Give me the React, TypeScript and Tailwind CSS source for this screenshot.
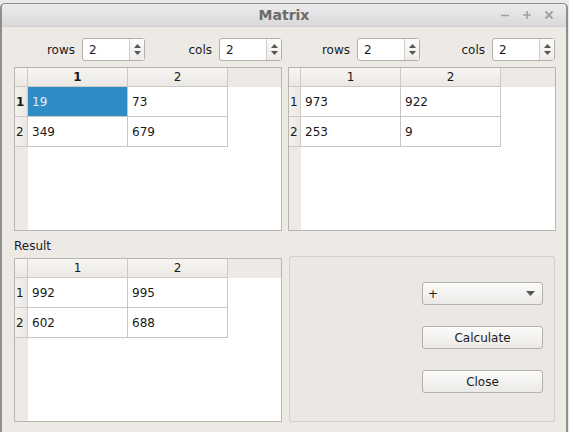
import React from "react";

const FONT = { fontFamily: '"DejaVu Sans", "Liberation Sans", sans-serif' };

function SpinBox({ value }: { value: string }) {
  return (
    <div className="flex h-[23px] w-[63px] items-stretch rounded-[3px] border border-[#b3afa9] bg-white">
      <div className="flex flex-1 items-center pl-[6px] text-[12px] text-[#1a1a1a]">{value}</div>
      <div className="flex w-[15px] flex-col items-center justify-center gap-[3px] border-l border-[#cfcbc5] bg-gradient-to-b from-[#fbfbfa] to-[#eeece9]">
        <svg width="7" height="4" viewBox="0 0 7 4">
          <path d="M0 4 L3.5 0 L7 4 Z" fill="#555" />
        </svg>
        <svg width="7" height="4" viewBox="0 0 7 4">
          <path d="M0 0 L7 0 L3.5 4 Z" fill="#555" />
        </svg>
      </div>
    </div>
  );
}

function SpinGroup({ label }: { label: string }) {
  return (
    <div className="flex items-center justify-end gap-[7px]">
      <span className="text-[12px] text-[#1a1a1a]">{label}</span>
      <SpinBox value="2" />
    </div>
  );
}

type TableProps = {
  data: string[][];
  rowHeaderW: number;
  boldFirst?: boolean;
  selected?: boolean;
};

function Table({ data, rowHeaderW, boldFirst, selected }: TableProps) {
  const rhClass = rowHeaderW === 13 ? "w-[13px]" : "w-[12px]";
  return (
    <div className="flex h-[164px] w-[268px] flex-col overflow-hidden border border-[#b8b4ae] bg-white">
      <div className="flex h-[19px] shrink-0 bg-[#edeae6]">
        <div className={`${rhClass} shrink-0 border-r border-b border-[#cdc9c3] bg-gradient-to-b from-[#f7f6f4] to-[#ebe8e4]`} />
        {["1", "2"].map((h, i) => (
          <div
            key={h}
            className={`flex w-[100px] shrink-0 items-center justify-center border-r border-b border-[#cdc9c3] bg-gradient-to-b from-[#f7f6f4] to-[#ebe8e4] text-[12px] text-[#1a1a1a] ${boldFirst && i === 0 ? "font-bold" : ""}`}
          >
            {h}
          </div>
        ))}
        <div className="flex-1" />
      </div>
      <div className="flex flex-1">
        <div className={`${rhClass} flex shrink-0 flex-col bg-[#edeae6]`}>
          {data.map((_, r) => (
            <div
              key={r}
              className={`flex h-[30px] items-center border-r border-b border-[#cdc9c3] bg-gradient-to-r from-[#f3f1ee] to-[#ebe8e4] pl-[1px] text-[12px] text-[#1a1a1a] ${boldFirst && r === 0 ? "font-bold" : ""}`}
            >
              {r + 1}
            </div>
          ))}
        </div>
        <div className="flex flex-col">
          {data.map((row, r) => (
            <div key={r} className="flex h-[30px]">
              {row.map((c, ci) => {
                const sel = selected && r === 0 && ci === 0;
                return (
                  <div
                    key={ci}
                    className={`flex w-[100px] items-center border-r border-b border-[#c9c6c2] pl-[4px] text-[12px] ${sel ? "bg-[#308cc6] text-[#e3eef8]" : "text-[#1a1a1a]"}`}
                  >
                    {c}
                  </div>
                );
              })}
            </div>
          ))}
        </div>
      </div>
    </div>
  );
}

function PushButton({ children }: { children: React.ReactNode }) {
  return (
    <div className="flex h-[23px] w-[121px] items-center justify-center rounded-[3px] border border-[#b3afa9] bg-gradient-to-b from-[#fbfbfa] to-[#eceae7] text-[12px] text-[#1a1a1a]">
      {children}
    </div>
  );
}

export default function App() {
  return (
    <div className="h-[432px] w-[569px] overflow-hidden bg-[#e9e9e9] pt-[3px] pr-[1px]" style={FONT}>
      <div className="flex h-[429px] flex-col overflow-hidden rounded-t-[5px] border-x-2 border-t border-[#8e8e8e] bg-[#edeae6]">
        <div className="relative flex h-[23px] shrink-0 items-center justify-center border-b border-[#cfcfcf] bg-gradient-to-b from-[#ececec] to-[#d9d9d9]">
          <span className="text-[14px] font-bold text-[#6b6b6b]">Matrix</span>
          <div className="absolute right-[12px] top-0 flex h-full items-center gap-[12px]">
            <svg width="10" height="10" viewBox="0 0 10 10">
              <path d="M1 5.5 H9" stroke="#a0a0a0" strokeWidth="1.6" />
            </svg>
            <svg width="10" height="10" viewBox="0 0 10 10">
              <path d="M1 5 H9 M5 1 V9" stroke="#a0a0a0" strokeWidth="1.6" />
            </svg>
            <svg width="10" height="10" viewBox="0 0 10 10">
              <path d="M1.5 1.5 L8.5 8.5 M8.5 1.5 L1.5 8.5" stroke="#a0a0a0" strokeWidth="1.8" />
            </svg>
          </div>
        </div>
        <div className="flex flex-col pl-[12px] pr-[10px] pt-[11px]">
          <div className="grid grid-cols-[268px_268px] gap-x-[6px]">
            <div className="grid grid-cols-2">
              <div className="pr-[3px]"><SpinGroup label="rows" /></div>
              <SpinGroup label="cols" />
            </div>
            <div className="grid grid-cols-2">
              <div className="pr-[2px]"><SpinGroup label="rows" /></div>
              <div className="pr-[1px]"><SpinGroup label="cols" /></div>
            </div>
          </div>
          <div className="mt-[6px] grid grid-cols-[268px_268px] gap-x-[6px]">
            <Table data={[["19", "73"], ["349", "679"]]} rowHeaderW={13} boldFirst selected />
            <Table data={[["973", "922"], ["253", "9"]]} rowHeaderW={12} />
          </div>
          <div className="grid grid-cols-[268px_268px] gap-x-[6px]">
            <div className="flex flex-col">
              <div className="flex h-[27px] items-center pt-[2px] text-[12px] text-[#1a1a1a]">Result</div>
              <Table data={[["992", "995"], ["602", "688"]]} rowHeaderW={13} />
            </div>
            <div className="ml-[1px] mt-[25px] flex h-[166px] w-[266px] flex-col items-end gap-[21px] rounded-[2px] border border-[#d3cfca] bg-[#ebe8e4] pr-[11px] pt-[25px]">
              <div className="flex h-[23px] w-[121px] items-center justify-between rounded-[3px] border border-[#b3afa9] bg-gradient-to-b from-[#fbfbfa] to-[#eceae7] pl-[5px] pr-[7px] text-[12px] text-[#1a1a1a]">
                <span>+</span>
                <svg width="9" height="5" viewBox="0 0 9 5">
                  <path d="M0 0 H9 L4.5 5 Z" fill="#555" />
                </svg>
              </div>
              <PushButton>Calculate</PushButton>
              <PushButton>Close</PushButton>
            </div>
          </div>
        </div>
      </div>
    </div>
  );
}
